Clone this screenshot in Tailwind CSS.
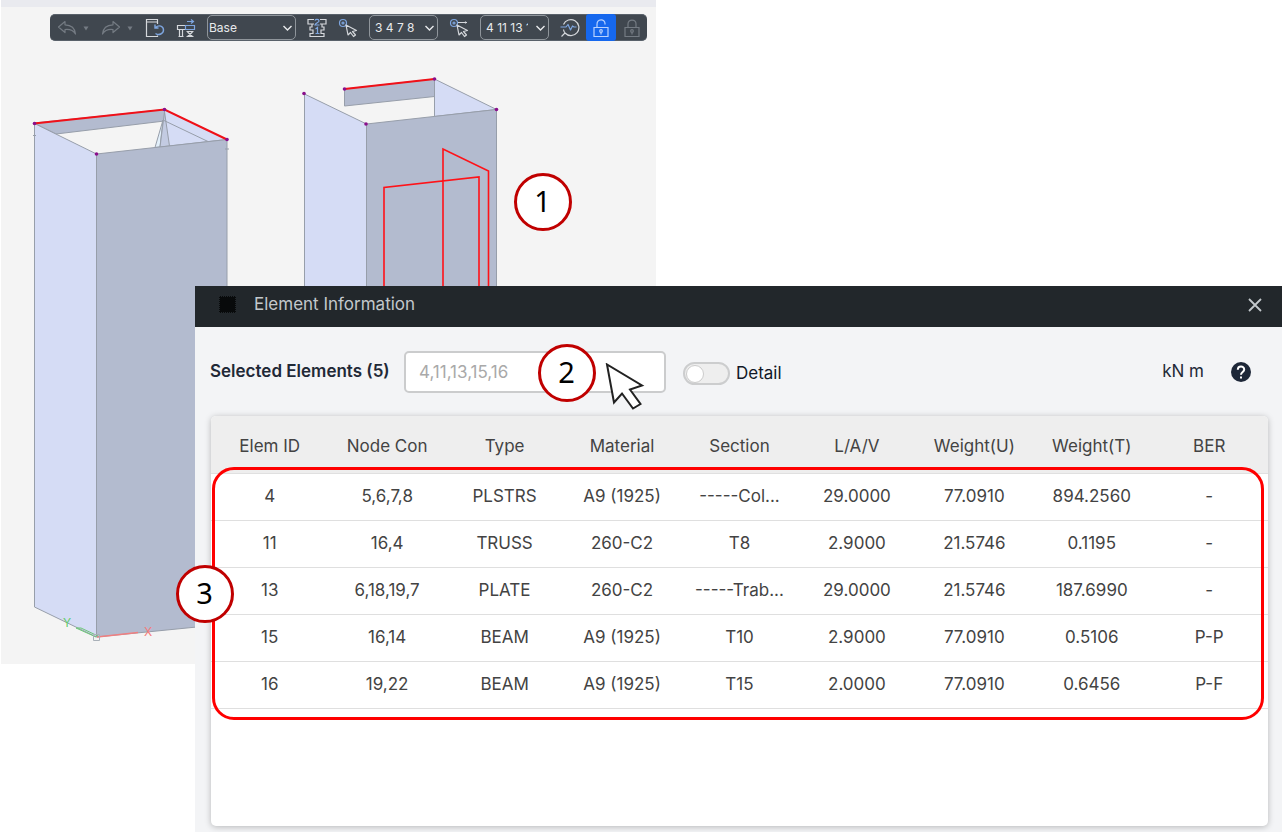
<!DOCTYPE html>
<html lang="en">
<head>
    <meta charset="UTF-8">
    <meta name="viewport" content="width=device-width, initial-scale=1.0">
    <title>Element Information</title>
    <script src="https://cdn.jsdelivr.net/npm/@tailwindcss/browser@4"></script>
</head>
<body class="bg-white font-['Inter',sans-serif]">
    <main class="relative min-h-screen overflow-hidden">

        <!-- Model view -->
        <section class="relative ml-px w-[655px] h-[664px] bg-[#f4f4f4]">
            <svg class="absolute inset-0 w-full h-full" viewBox="1 0 655 664" fill="none">
                <!-- Left tower -->
                <g stroke="#979eaa" stroke-width="1" stroke-linejoin="round">
                    <path fill="#b3bbcf" d="M34 123L164.500 109.500V121L56 134z"/>
                    <path fill="#d5dcf5" d="M164.500 109.500L227 139.500L165 146.500z"/>
                    <path fill="#e2effa" d="M163 120L155 147.500L160 147z"/>
                    <path fill="#c3cbe2" d="M164.500 112L160 147L169.500 146z"/>
                    <path d="M164 120.500L208 141.500"/>
                    <path fill="#d5dcf5" d="M34.500 123.500L96.500 154V637L34.500 607z"/>
                    <path fill="#b3bbcf" d="M96.500 154L227 139.500V624L96.500 637z"/>
                    <path d="M33 135.500h3M225 149h4"/>
                </g>
                <path stroke="#f01018" stroke-width="2" d="M34 123.500L164.500 109.500L227 139.500"/>
                <!-- Right tower -->
                <g stroke="#979eaa" stroke-width="1" stroke-linejoin="round">
                    <path fill="#d5dcf5" d="M434.500 79L496.500 109.500L434.500 116.500z"/>
                    <path fill="#b3bbcf" d="M344.500 89L434.500 79V96.500L344.500 106z"/>
                    <path fill="#d5dcf5" d="M304.500 94L366.500 124V607L304.500 577z"/>
                    <path fill="#b3bbcf" d="M366.500 124L496.500 109.500V590L366.500 607z"/>
                </g>
                <path stroke="#f01018" stroke-width="2" d="M344.500 89L434.500 79"/>
                <path stroke="#ff1218" stroke-width="1.600" d="M384 400V187.500L479 177V400M443 400V149L488.500 171V400"/>
                <g fill="#8a0f8c">
                    <circle cx="34.500" cy="123.500" r="1.800"/><circle cx="164.500" cy="109.500" r="1.800"/>
                    <circle cx="227" cy="139.500" r="1.800"/><circle cx="96.500" cy="154" r="1.800"/>
                    <circle cx="304" cy="93.500" r="1.800"/><circle cx="366" cy="124" r="1.800"/>
                    <circle cx="344.500" cy="89" r="1.800"/><circle cx="434.500" cy="79" r="1.800"/>
                    <circle cx="496.500" cy="109.500" r="1.800"/>
                </g>
                <!-- Axes -->
                <path stroke="#f07f80" stroke-width="1.600" d="M97 637L138 632.500"/>
                <path stroke="#6cc878" d="M96 637L76 628L81 628L98 636"/>
                <path stroke="#a9b0b8" d="M93.500 634.500h6v6h-6z"/>
                <text x="63" y="627" fill="#62cc6c" class="text-[12px]">Y</text>
                <text x="144" y="636" fill="#f47c7c" class="text-[12px]">X</text>
            </svg>

            <div class="h-[7px] bg-[#e9eaef]"></div>

            <!-- Toolbar -->
            <div class="relative mt-[7px] ml-[49px] w-fit h-[27px] pl-[7px] pr-[5px] flex items-center gap-[11px] rounded-[5px] bg-[#40474f] border-y border-[#59616a] text-[#d5d8dc]">
                <button type="button" aria-label="Undo" class="w-[33px] flex items-center gap-[5px] text-[#747b83]">
                    <svg class="w-5 h-5" viewBox="0 0 20 20" fill="none" stroke="currentColor" stroke-width="1.200" stroke-linejoin="round"><path d="M8 3.500L1.500 9L8 14.500V11.500C13 11 16.500 12.500 18.500 16C18 10.500 14 7 8 6.800z"/></svg>
                    <svg class="w-2 h-2" viewBox="0 0 8 8" fill="currentColor"><path d="M1.500 2.500h5L4 6.500z"/></svg>
                </button>
                <button type="button" aria-label="Redo" class="w-[33px] flex items-center gap-[5px] text-[#747b83]">
                    <svg class="w-5 h-5" viewBox="0 0 20 20" fill="none" stroke="currentColor" stroke-width="1.200" stroke-linejoin="round"><path d="M12 3.500L18.500 9L12 14.500V11.500C7 11 3.500 12.500 1.500 16C2 10.500 6 7 12 6.800z"/></svg>
                    <svg class="w-2 h-2" viewBox="0 0 8 8" fill="currentColor"><path d="M1.500 2.500h5L4 6.500z"/></svg>
                </button>
                <button type="button" aria-label="Refresh model">
                    <svg class="w-5 h-5" viewBox="0 0 20 20" fill="none" stroke="currentColor" stroke-width="1.200"><path d="M12.500 6V1.500H1.500V18.500H12.500V17.500M1.500 4H12.500"/><path stroke="#7ea6e0" stroke-width="1.400" d="M10.500 15.500C14 18 18.500 15.500 18.500 12C18.500 8 14 6.500 10.500 9.500M10 6.500V10H13.500"/></svg>
                </button>
                <button type="button" aria-label="Move stage">
                    <svg class="w-5 h-5" viewBox="0 0 20 20" fill="none" stroke="currentColor" stroke-width="1.200"><path d="M9.500 7.500H1.500V11.500H9.500M3.500 11.500V18.500M6.500 11.500V18.500M2.500 18.500H7.500M10.500 13.500H17.500M11.500 14L16.500 18.500M16.500 14L11.500 18.500M10.500 18.500H17.500"/><path stroke="#7ea6e0" d="M9.500 7.500H18.500V11.500H9.500zM11 3.500H17M15 1.500L17.500 3.500L15 5.500"/></svg>
                </button>
                <div class="relative">
                    <select aria-label="Stage" class="block w-[89px] h-[25px] appearance-none rounded-[5px] border border-[#8f959b] pl-px pr-5 text-[12px] text-[#e8eaec]">
                        <option>Base</option>
                    </select>
                    <svg class="absolute right-[3px] top-2 w-[11px] h-[10px] pointer-events-none" viewBox="0 0 11 10" fill="none" stroke="#e8eaec" stroke-width="1.400"><path d="M1.500 3L5.500 7L9.500 3"/></svg>
                </div>
                <button type="button" aria-label="Section order">
                    <svg class="w-5 h-5" viewBox="0 0 20 20" fill="none" stroke="currentColor" stroke-width="1.200"><path d="M7 1.500H1V6H7M13 1.500H19V6H13M5 6V9H3V12H6V15.500H3V18.500H17V15.500H14V12H17V9H15V6"/><path stroke="#7ea6e0" d="M8 2.500C8.500 1 12 1 12 3C12 4.500 8.500 5 8 7H12.500M8.500 11L10.500 9.500V15.500M8.500 15.500H12.500"/></svg>
                </button>
                <button type="button" aria-label="Select nodes">
                    <svg class="w-5 h-5" viewBox="0 0 20 20" fill="none" stroke="currentColor" stroke-width="1.200" stroke-linejoin="round"><g stroke="#7ea6e0"><circle cx="5" cy="5" r="3.500"/><circle cx="5" cy="5" r="1"/></g><path d="M8 7L10 17L12.500 14.500L15.500 18.500L17.500 17L14.500 13.500L18.500 12.500z"/></svg>
                </button>
                <div class="relative">
                    <select aria-label="Selected nodes" class="block w-[69px] h-[25px] appearance-none rounded-[5px] border border-[#8f959b] pl-[5px] pr-5 text-[12px] text-[#e8eaec]">
                        <option>3 4 7 8</option>
                    </select>
                    <svg class="absolute right-[3px] top-2 w-[11px] h-[10px] pointer-events-none" viewBox="0 0 11 10" fill="none" stroke="#e8eaec" stroke-width="1.400"><path d="M1.500 3L5.500 7L9.500 3"/></svg>
                </div>
                <button type="button" aria-label="Select elements">
                    <svg class="w-5 h-5" viewBox="0 0 20 20" fill="none" stroke="currentColor" stroke-width="1.200" stroke-linejoin="round"><g stroke="#7ea6e0"><circle cx="5" cy="5" r="3.500"/><circle cx="5" cy="5" r="1"/></g><path d="M9 4.500H18M16.500 3.500V5.500M8 7L10 17L12.500 14.500L15.500 18.500L17.500 17L14.500 13.500L18.500 12.500z"/></svg>
                </button>
                <div class="relative">
                    <select aria-label="Selected elements" class="block w-[69px] h-[25px] appearance-none rounded-[5px] border border-[#8f959b] pl-[5px] pr-5 text-[12px] text-[#e8eaec]">
                        <option>4 11 13 15 16</option>
                    </select>
                    <svg class="absolute right-[3px] top-2 w-[11px] h-[10px] pointer-events-none" viewBox="0 0 11 10" fill="none" stroke="#e8eaec" stroke-width="1.400"><path d="M1.500 3L5.500 7L9.500 3"/></svg>
                </div>
                <div class="flex items-center gap-[6px]">
                    <button type="button" aria-label="Query">
                        <svg class="w-5 h-5" viewBox="0 0 20 20" fill="none" stroke="currentColor" stroke-width="1.200"><path d="M3.500 6.500A8 8 0 1 1 5 15M3.500 11.500A8 8 0 0 0 5 15L1.500 18.500"/><path stroke="#7ea6e0" stroke-linejoin="round" d="M0.500 9H6L8 6.500L10.500 12L12.500 8L14 9H16.500"/></svg>
                    </button>
                    <button type="button" aria-label="Unlock" class="w-[30px] h-[27px] flex items-center justify-center rounded-[3px] bg-[#1668ee]">
                        <svg class="w-5 h-5" viewBox="0 0 20 20" fill="none" stroke="#b9d3ff" stroke-width="1.200"><path d="M3 9.500H17V18.500H3zM6 9.500V6.500C6 0.500 14 0.500 14 5.500V6.500"/><circle cx="10" cy="13" r="1.300"/><path d="M10 14.500V16.500"/></svg>
                    </button>
                    <button type="button" aria-label="Lock" class="text-[#747b83]">
                        <svg class="w-5 h-5" viewBox="0 0 20 20" fill="none" stroke="currentColor" stroke-width="1.200"><path d="M3 9.500H17V18.500H3zM6 9.500V6C6 0.800 14 0.800 14 6V9.500"/><circle cx="10" cy="13" r="1.300"/><path d="M10 14.500V16.500"/></svg>
                    </button>
                </div>
            </div>

            <div class="absolute left-[513px] top-[173px] w-[58px] h-[58px] pb-[3px] pr-px rounded-full border-3 border-[#c00000] bg-white flex items-center justify-center font-['Noto_Sans',sans-serif] text-[29px] leading-none text-black">1</div>
        </section>

        <!-- Element information window -->
        <section class="absolute left-[195px] right-[2px] top-[286px] bottom-0 flex flex-col bg-[#f3f4f6]">
            <header class="h-[41px] shrink-0 flex items-center pl-6 pr-5 pb-[3px] bg-[#22272b] text-[#c3c8cc]">
                <span class="w-[17px] h-[17px] mb-px bg-[#080a0b] border border-dotted border-[#22272b]"></span>
                <h1 class="ml-[18px] text-[17px]">Element Information</h1>
                <button type="button" aria-label="Close" class="ml-auto">
                    <svg class="w-[14px] h-[14px]" viewBox="0 0 14 14" fill="none" stroke="currentColor" stroke-width="1.800"><path d="M1 1L13 13M13 1L1 13"/></svg>
                </button>
            </header>

            <div class="mt-6 px-[15px] flex items-center text-[17px] text-[#1f2937]">
                <label for="elements" class="w-[194px] font-semibold">Selected Elements (5)</label>
                <div class="relative">
                    <input id="elements" type="text" placeholder="4,11,13,15,16" class="block w-[262px] h-[42px] px-[13px] rounded-[5px] border-2 border-[#cbcccd] bg-white placeholder:text-[#a9a9a9]">
                    <div class="absolute left-[134px] -top-[7px] w-[58px] h-[58px] pb-[3px] pr-px rounded-full border-3 border-[#c00000] bg-white flex items-center justify-center font-['Noto_Sans',sans-serif] text-[29px] leading-none text-black">2</div>
                    <svg class="absolute left-[201px] top-3 w-10 h-12" viewBox="0 0 40 48" fill="#fff" stroke="#222" stroke-width="2"><path d="M2 1.500L9 39.500L17 30.500L28 45.500L35.500 41L25 26.500L37 22.500z"/></svg>
                </div>
                <label class="ml-[17px] pt-[3px] flex items-center gap-[6px] text-[17px] text-[#111827]">
                    <input type="checkbox" class="peer sr-only">
                    <span class="w-[47px] h-[23px] p-px flex items-center rounded-full border-2 border-[#cccdce] bg-[#eee]">
                        <span class="w-[18px] h-[18px] rounded-full border border-[#ccc] bg-white"></span>
                    </span>
                    Detail
                </label>
                <span class="ml-auto">kN m</span>
                <button type="button" aria-label="Help" class="ml-[27px] mr-4">
                    <svg class="w-5 h-5" viewBox="0 0 20 20" fill="none"><circle cx="10" cy="10" r="10" fill="#1d2738"/><path stroke="#fff" stroke-width="2" d="M6.800 7.800C6.800 3.500 13.200 3.500 13.200 7.500C13.200 10 10 10 10 12.800M10 14.500V16.500"/></svg>
                </button>
            </div>

            <div class="relative ml-4 mr-[14px] mt-[23px] mb-[6px] grow rounded-[5px] bg-white shadow-[0_1px_6px_rgba(0,0,0,0.25)]">
                <table class="w-full table-fixed text-center text-[17px] text-[#434343]">
                    <thead class="h-[57px] bg-[#eee]">
                        <tr class="border-b border-[#e0e0e0]">
                            <th class="pt-1 font-normal rounded-tl-[5px]">Elem ID</th>
                            <th class="pt-1 font-normal">Node Con</th>
                            <th class="pt-1 font-normal">Type</th>
                            <th class="pt-1 font-normal">Material</th>
                            <th class="pt-1 font-normal">Section</th>
                            <th class="pt-1 font-normal">L/A/V</th>
                            <th class="pt-1 font-normal">Weight(U)</th>
                            <th class="pt-1 font-normal">Weight(T)</th>
                            <th class="pt-1 font-normal rounded-tr-[5px]">BER</th>
                        </tr>
                    </thead>
                    <tbody>
                        <tr class="h-[47px] border-b border-[#dfdfdf]"><td>4</td><td>5,6,7,8</td><td>PLSTRS</td><td>A9 (1925)</td><td>-----Col...</td><td>29.0000</td><td>77.0910</td><td>894.2560</td><td>-</td></tr>
                        <tr class="h-[47px] border-b border-[#dfdfdf]"><td>11</td><td>16,4</td><td>TRUSS</td><td>260-C2</td><td>T8</td><td>2.9000</td><td>21.5746</td><td>0.1195</td><td>-</td></tr>
                        <tr class="h-[47px] border-b border-[#dfdfdf]"><td>13</td><td>6,18,19,7</td><td>PLATE</td><td>260-C2</td><td>-----Trab...</td><td>29.0000</td><td>21.5746</td><td>187.6990</td><td>-</td></tr>
                        <tr class="h-[47px] border-b border-[#dfdfdf]"><td>15</td><td>16,14</td><td>BEAM</td><td>A9 (1925)</td><td>T10</td><td>2.9000</td><td>77.0910</td><td>0.5106</td><td>P-P</td></tr>
                        <tr class="h-[47px] border-b border-[#dfdfdf]"><td>16</td><td>19,22</td><td>BEAM</td><td>A9 (1925)</td><td>T15</td><td>2.0000</td><td>77.0910</td><td>0.6456</td><td>P-F</td></tr>
                    </tbody>
                </table>
                <!-- Callout round the result rows -->
                <div class="absolute left-px right-1 top-[51px] h-[253px] rounded-[22px] border-3 border-[#ff0000] pointer-events-none"></div>
                <div class="absolute -left-[35px] top-[149px] w-[58px] h-[58px] pb-[3px] pr-px rounded-full border-3 border-[#c00000] bg-white flex items-center justify-center font-['Noto_Sans',sans-serif] text-[29px] leading-none text-black">3</div>
            </div>
        </section>
    </main>
</body>
</html>
